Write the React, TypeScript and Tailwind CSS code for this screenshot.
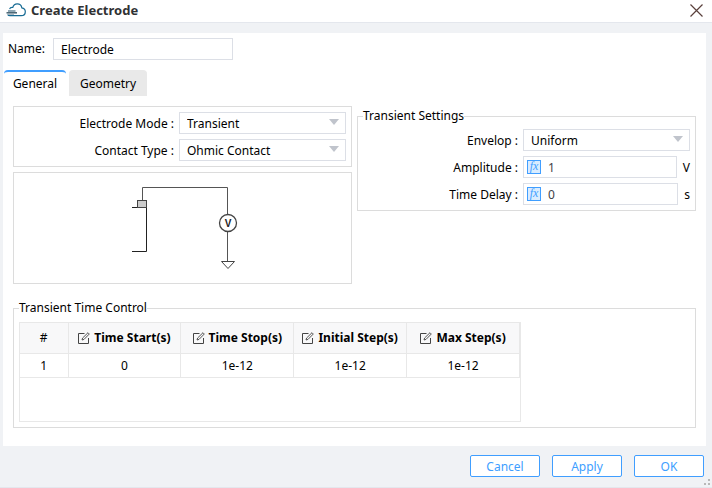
import { useState } from "react";
import type { ReactNode } from "react";

const fieldBox = "h-[22px] border border-[#dcdfe6] bg-white";

function SelectBox({ id, options }: { id: string; options: string[] }) {
  return (
    <div className="relative w-[167px]">
      <select
        id={id}
        className={`${fieldBox} block w-full appearance-none pt-px pr-6 pl-[7px] leading-5 outline-none focus:border-[#409eff]`}
      >
        {options.map((option) => (
          <option key={option}>{option}</option>
        ))}
      </select>
      <svg
        className="pointer-events-none absolute top-[7px] right-[7px] h-[6px] w-[10px]"
        viewBox="0 0 10 6"
        aria-hidden="true"
      >
        <path d="M0 0H10L5 6Z" fill="#c0c4cc" />
      </svg>
    </div>
  );
}

function Row({ id, label, children }: { id: string; label: string; children: ReactNode }) {
  return (
    <div className="flex h-[22px] items-center justify-end">
      <label htmlFor={id} className="mr-[5px] pt-px whitespace-pre">
        {label} :
      </label>
      {children}
    </div>
  );
}

function ExpressionInput({ id, value, unit }: { id: string; value: string; unit: string }) {
  return (
    <div className="flex w-[167px] items-center gap-[6px]">
      <div className={`${fieldBox} flex min-w-0 flex-1 items-center pl-[3px]`}>
        <button
          type="button"
          aria-label="Edit expression"
          className="flex size-[14px] shrink-0 items-center justify-center border border-[#409eff] bg-[#d9ecff] pb-[2px] font-['Liberation_Serif',serif] text-[12px] leading-3 text-[#409eff] italic"
        >
          fx
        </button>
        <input
          id={id}
          defaultValue={value}
          className="w-full min-w-0 bg-transparent pt-px pl-[7px] leading-5 text-[#3f4248] outline-none"
        />
      </div>
      <span className="pt-px">{unit}</span>
    </div>
  );
}

function EditIcon() {
  return (
    <svg className="size-[12px] shrink-0" viewBox="0 0 12 12" fill="none" stroke="#444" aria-hidden="true">
      <path d="M6.5 1.5H0.5V11.5H10.5V6" />
      <path d="M4 8L4.600 6L10 0.700L11.300 2L6 7.400Z" strokeWidth="0.9" />
    </svg>
  );
}

function CloudLogo() {
  return (
    <svg className="h-[14px] w-[20px]" viewBox="0 0 20 14" fill="none" aria-hidden="true">
      <path
        d="M3.600 6.200C4 4.800 5.200 4.200 6.800 4.400C7.500 1.900 9.100 0.800 11.200 0.800C13.700 0.800 15.500 2.400 15.800 4.800C18 5.200 19.300 6.600 19.300 8.700C19.300 11.200 17.600 12.700 15.200 12.700H4C2.800 12.700 2 12.200 1.600 11.400"
        stroke="#176b94"
        strokeWidth="1.2"
      />
      <path d="M2 8H9.500" stroke="#5f8294" strokeWidth="1.4" />
      <path d="M0.500 9.800H11" stroke="#44606f" strokeWidth="1.500" />
      <path d="M2 11.300H8" stroke="#8fa7b3" />
    </svg>
  );
}

function CircuitDiagram() {
  return (
    <svg
      className="mx-auto block h-[90px] w-[110px]"
      viewBox="0 0 110 90"
      fill="none"
      stroke="#444"
      role="img"
      aria-label="Electrode circuit"
    >
      <path d="M11.500 17V4.500H96.500V31M96.500 49V78" stroke="#555" />
      <path d="M1 24.500H15.500M1 68.500H15.500V24.500" stroke="#222" />
      <rect x="6.500" y="17.500" width="9" height="7" fill="#ccc" />
      <circle cx="97" cy="40" r="8.500" strokeWidth="1.3" />
      <path d="M90.500 78.500H103.500L97 85.500Z" />
      <text
        x="97"
        y="44"
        textAnchor="middle"
        fill="#222"
        stroke="none"
        className="font-['Liberation_Sans',sans-serif] text-[10px] font-bold"
      >
        V
      </text>
    </svg>
  );
}

const columns = ["Time Start(s)", "Time Stop(s)", "Initial Step(s)", "Max Step(s)"];
const rows = [["0", "1e-12", "1e-12", "1e-12"]];

export default function App() {
  const [tab, setTab] = useState("General");

  return (
    <div className="flex min-h-screen flex-col border-b border-[#e4e7ed] bg-[#f0f2f5] font-['Noto_Sans','Open_Sans',sans-serif] text-[12px] leading-[18px] text-black">
      <header className="flex h-[23px] items-center border-b border-[#e4e7ed] bg-white pr-[9px] pb-[2px] pl-[6px]">
        <CloudLogo />
        <h1 className="ml-[5px] flex-1 text-[13px] font-bold text-[#303133]">Create Electrode</h1>
        <button type="button" aria-label="Close">
          <svg className="size-[13px]" viewBox="0 0 13 13" stroke="#5a403c" strokeWidth="1.2" aria-hidden="true">
            <path d="M0.500 0.500L12.500 12.500M12.500 0.500L0.500 12.500" />
          </svg>
        </button>
      </header>

      <main className="mt-[10px] mr-[6px] ml-[3px] bg-white pt-[5px] pb-[18px]">
        <div className="flex items-center pl-[5px]">
          <label htmlFor="name" className="mr-2">
            Name:
          </label>
          <input id="name" defaultValue="Electrode" className={`${fieldBox} w-[180px] pt-px pl-[7px] leading-5 outline-none`} />
        </div>

        <div role="tablist" className="mt-[10px] flex gap-[3px] pl-px">
          {["General", "Geometry"].map((name) => (
            <button
              key={name}
              type="button"
              role="tab"
              aria-selected={tab === name}
              onClick={() => setTab(name)}
              className={`h-[26px] rounded-t-[4px] border-t-2 ${
                tab === name
                  ? "w-[62px] border-[#409eff] bg-white"
                  : "w-[78px] border-[#e9e9e9] bg-[#e9e9e9]"
              }`}
            >
              {name}
            </button>
          ))}
        </div>

        <div className="mt-[10px] px-[10px]">
          <div className="grid grid-cols-2 gap-[5px]">
            <div className="flex flex-col gap-[5px]">
              <section className="flex flex-col gap-[5px] border border-[#dcdcdc] p-[5px]">
                <Row id="mode" label="Electrode Mode">
                  <SelectBox id="mode" options={["Transient", "Steady State"]} />
                </Row>
                <Row id="contact" label="Contact Type">
                  <SelectBox id="contact" options={["Ohmic Contact", "Schottky Contact"]} />
                </Row>
              </section>
              <section className="border border-[#dcdcdc] py-[10px] pl-[6px]">
                <CircuitDiagram />
              </section>
            </div>

            <fieldset className="flex flex-col gap-[5px] self-start border border-[#dcdcdc] px-[5px] pt-[3px] pb-[5px]">
              <legend className="leading-5">Transient Settings</legend>
              <Row id="envelop" label="Envelop">
                <SelectBox id="envelop" options={["Uniform", "Pulse"]} />
              </Row>
              <Row id="amplitude" label="Amplitude">
                <ExpressionInput id="amplitude" value="1" unit="V" />
              </Row>
              <Row id="delay" label="Time Delay">
                <ExpressionInput id="delay" value="0" unit="s" />
              </Row>
            </fieldset>
          </div>

          <fieldset className="mt-[14px] border border-[#dcdcdc] px-[5px] pt-[4px] pb-[5px]">
            <legend className="leading-5">Transient Time Control</legend>
            <div className="h-[100px] w-[502px] border border-[#e8e8e8]">
              <table className="w-full table-fixed border-collapse text-center">
                <thead>
                  <tr className="h-[30px] bg-[#f8f8f9]">
                    <th className="w-[48px] border-r border-b border-[#e8e8e8] pt-px font-normal">#</th>
                    {columns.map((column) => (
                      <th key={column} className="border-r border-b border-[#e8e8e8] pt-px font-bold">
                        <span className="flex items-center justify-center gap-1 whitespace-nowrap">
                          <EditIcon />
                          {column}
                        </span>
                      </th>
                    ))}
                  </tr>
                </thead>
                <tbody>
                  {rows.map((row, index) => (
                    <tr key={index} className="h-[24px]">
                      <td className="border-r border-b border-[#e8e8e8] pt-[2px]">{index + 1}</td>
                      {row.map((value, i) => (
                        <td key={columns[i]} className="border-r border-b border-[#e8e8e8] pt-[2px]">
                          {value}
                        </td>
                      ))}
                    </tr>
                  ))}
                </tbody>
              </table>
            </div>
          </fieldset>
        </div>
      </main>

      <footer className="relative flex h-[41px] items-start justify-end gap-3 pt-[9px] pr-2">
        {["Cancel", "Apply", "OK"].map((action) => (
          <button
            key={action}
            type="button"
            className="h-[22px] w-[70px] rounded-[2px] border border-[#409eff] bg-white pt-px text-[#409eff]"
          >
            {action}
          </button>
        ))}
        <svg className="absolute right-[2px] bottom-[2px] size-[6px]" viewBox="0 0 6 6" fill="#b8b8b8" aria-hidden="true">
          <path d="M4 0H6V2H4ZM0 4H2V6H0ZM4 4H6V6H4Z" />
        </svg>
      </footer>
    </div>
  );
}
